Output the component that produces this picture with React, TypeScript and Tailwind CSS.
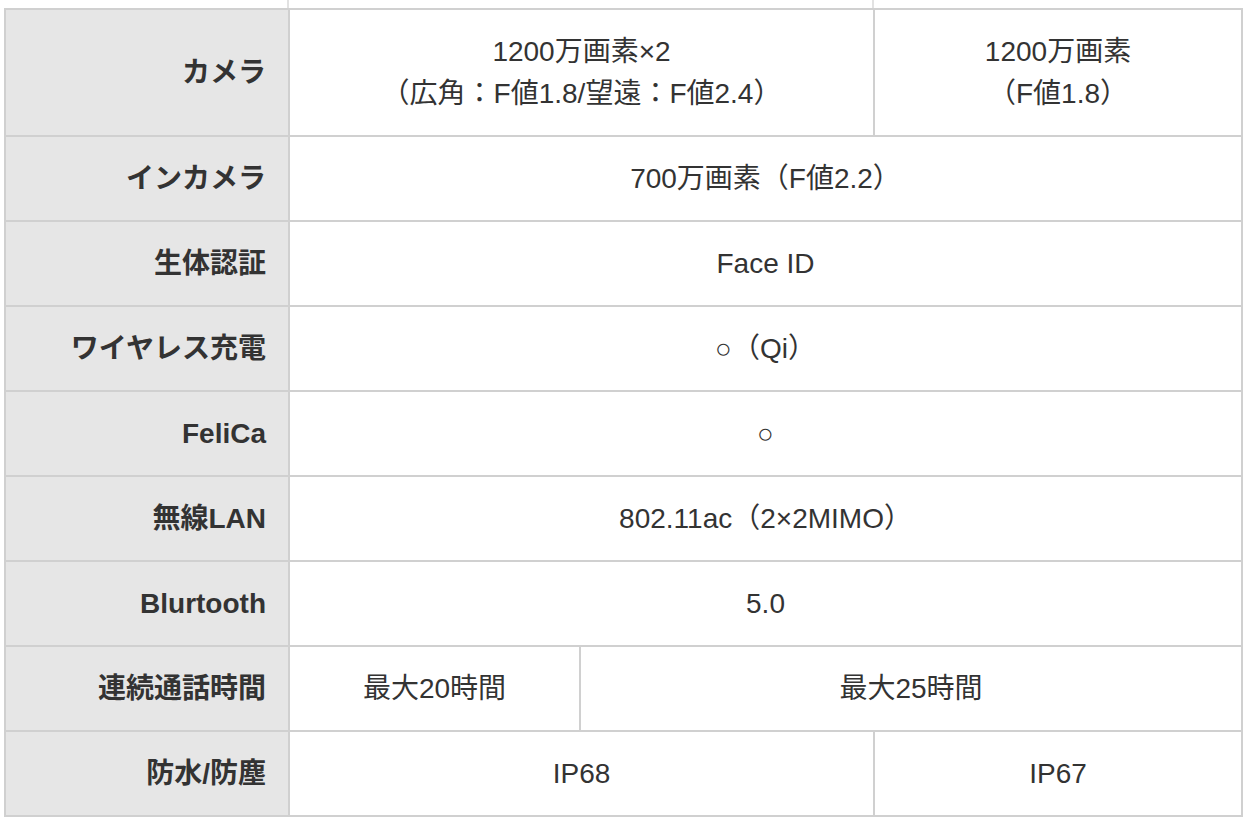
type Cell = { text: string[]; span: number };
type Row = { label: string; cells: Cell[] };

const ROWS: Row[] = [
  {
    label: "カメラ",
    cells: [
      { text: ["1200万画素×2", "（広角：F値1.8/望遠：F値2.4）"], span: 2 },
      { text: ["1200万画素", "（F値1.8）"], span: 1 },
    ],
  },
  { label: "インカメラ", cells: [{ text: ["700万画素（F値2.2）"], span: 3 }] },
  { label: "生体認証", cells: [{ text: ["Face ID"], span: 3 }] },
  { label: "ワイヤレス充電", cells: [{ text: ["○（Qi）"], span: 3 }] },
  { label: "FeliCa", cells: [{ text: ["○"], span: 3 }] },
  { label: "無線LAN", cells: [{ text: ["802.11ac（2×2MIMO）"], span: 3 }] },
  { label: "Blurtooth", cells: [{ text: ["5.0"], span: 3 }] },
  {
    label: "連続通話時間",
    cells: [
      { text: ["最大20時間"], span: 1 },
      { text: ["最大25時間"], span: 2 },
    ],
  },
  {
    label: "防水/防塵",
    cells: [
      { text: ["IP68"], span: 2 },
      { text: ["IP67"], span: 1 },
    ],
  },
];

export default function App() {
  return (
    <div
      className="min-h-[824px] bg-white text-[#333]"
      style={{ fontFamily: '"Liberation Sans", "Noto Sans CJK JP", sans-serif' }}
    >
      {/* tail of the row above, cut off by the viewport */}
      <div className="flex h-[8px] pl-[287px]">
        <div className="w-[2px] bg-[#e2e2e2]" />
        <div className="w-[583px]" />
        <div className="w-[2px] bg-[#e2e2e2]" />
      </div>
      <table className="ml-[4px] w-[1237px] table-fixed border-collapse text-[28px] leading-[42px]">
        <colgroup>
          <col className="w-[284px]" />
          <col className="w-[291px]" />
          <col className="w-[294px]" />
          <col className="w-[368px]" />
        </colgroup>
        <tbody>
          {ROWS.map((row) => (
            <tr key={row.label}>
              <th className="border-2 border-[#d0d0d0] bg-[#e6e6e6] pt-[21px] pb-[20px] pr-[22px] text-right font-bold">
                {row.label}
              </th>
              {row.cells.map((cell, i) => (
                <td
                  key={i}
                  colSpan={cell.span}
                  className="border-2 border-[#d0d0d0] pt-[21px] pb-[20px] text-center font-normal"
                >
                  {cell.text.map((line) => (
                    <div key={line}>{line}</div>
                  ))}
                </td>
              ))}
            </tr>
          ))}
        </tbody>
      </table>
    </div>
  );
}
